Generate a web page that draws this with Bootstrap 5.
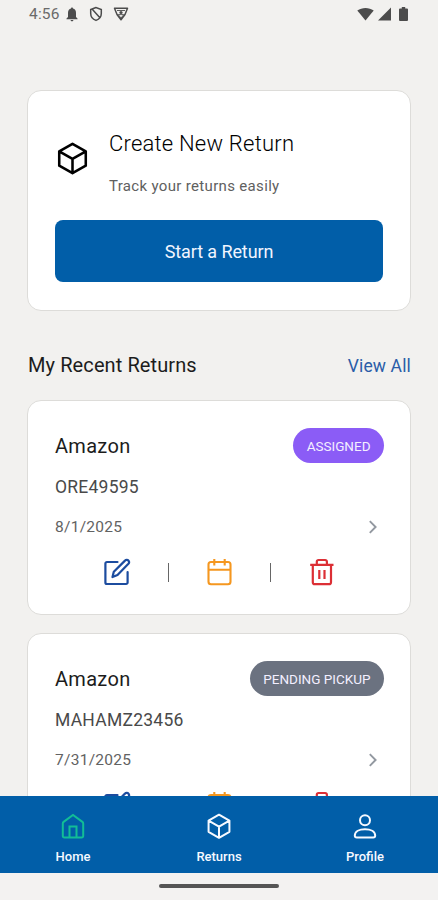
<!DOCTYPE html>
<html lang="en">
<head>
<meta charset="utf-8">
<meta name="viewport" content="width=device-width, initial-scale=1">
<title>Returns</title>
<link href="https://cdn.jsdelivr.net/npm/bootstrap@5.3.0/dist/css/bootstrap.min.css" rel="stylesheet">
<style>
body { font-family: Roboto, "Liberation Sans", sans-serif; background: #f2f1ef; color: #1c1c1c; }
svg { display: block; fill: none; stroke: currentColor; flex: none; }
.status-bar { height: 28px; padding: 0 30px 0 29px; color: #4c4c4c; }
.status-bar svg { fill: currentColor; stroke: none; }
.status-bar svg.line-icon { fill: none; stroke: currentColor; }
.clock { font-size: 15.5px; line-height: 28px; width: 36px; color: #6a6a6a; letter-spacing: .2px; }
.shield { margin-left: 10px; }
.content { padding: 62px 27px 0; min-height: 0; }
.panel { border: 1px solid #dddcd9; border-radius: 14px; background: #fff; padding: 27px; flex: none; }
.create { height: 221px; padding-top: 26px; }
.create-head { height: 103px; padding-top: 12px; gap: 19px; }
.cube-lg { margin-top: 12px; }
.create-title { font-size: 22px; line-height: 30px; font-weight: 300; letter-spacing: .22px; color: #000; }
.create-sub { font-size: 15px; line-height: 20px; margin-top: 17px; color: #606060; letter-spacing: .33px; }
.btn-start { height: 62px; background: #015ea8; color: #f1f5ff; border-radius: 8px; font-size: 18px; line-height: 24px; border: 0; padding: 1px 0 0; letter-spacing: -.1px; }
.section-head { height: 89px; padding-top: 19px; }
.section-title { font-size: 20px; letter-spacing: .1px; padding-left: 1px; }
.view-all { font-size: 17.5px; color: #2a5da8; letter-spacing: .15px; padding-top: 2px; }
.return-card { height: 215px; margin-bottom: 18px; padding-right: 26px; }
.card-top { height: 35px; }
.store { font-size: 20px; letter-spacing: .3px; padding-top: 1px; }
.status-pill { height: 35px; line-height: 36px; padding: 0 13.500px; border-radius: 18px; font-size: 13.5px; color: #f3efff; }
.assigned { background: #8b5cf6; }
.pending { background: #6b7280; }
.order-no { font-size: 17.5px; line-height: 24px; margin-top: 12px; color: #494949; letter-spacing: .25px; }
.date-row { height: 24px; margin-top: 17px; padding-right: 5px; font-size: 15.5px; color: #626262; letter-spacing: .28px; }
.date-row svg { margin-bottom: 2px; }
.actions { height: 32px; margin-top: 16px; }
.actions > div { width: 51px; }
.actions svg { margin-right: 2px; }
.sep { width: 1px; height: 19px; background: #666; }
.edit { color: #1c4c9f; } .cal { color: #f5971f; } .trash { color: #dc2f35; } .chev { color: #9298a0; }
.tabs { height: 77px; background: #015ea8; color: #f6f9ff; font-size: 13px; }
.tab { padding-top: 15px; gap: 5px; line-height: 21px; }
.tab span { font-weight: 500; }
.tab-on svg { color: #12bd96; }
.gesture { height: 27px; background: #f3f2f1; padding-bottom: 1px; }
.gesture div { width: 120px; height: 4px; border-radius: 2px; background: #555; }
</style>
</head>
<body>
<svg class="d-none">
  <symbol id="cube" viewBox="0 0 24 24"><path d="M12 1.900 2.900 7.100v9.800l9.100 5.200 9.100-5.200V7.100zM2.900 7.100l9.100 5.200 9.100-5.200M12 12.300v9.800" stroke-width="1.750" stroke-linejoin="round"/></symbol>
  <symbol id="edit" viewBox="0 0 28 28"><path d="M14.500 4H3.900a1.500 1.500 0 0 0-1.500 1.500v19a1.500 1.500 0 0 0 1.500 1.500h19.200a1.500 1.500 0 0 0 1.500-1.500V14M9.500 19l1.300-5.200L22 2.600a2.200 2.200 0 0 1 3.500.1 2.400 2.400 0 0 1-.1 3.100L14.500 17z" stroke-width="2.200" stroke-linecap="round" stroke-linejoin="round"/></symbol>
  <symbol id="calendar" viewBox="0 0 28 28"><rect x="3.500" y="4" width="22" height="22.200" rx="2.500" stroke-width="2.100"/><path d="M3.500 11.700h22M9.300 1v6.500M19.700 1v6.500" stroke-width="2.100"/></symbol>
  <symbol id="trash" viewBox="0 0 28 28"><path d="M3.200 6.800h23.300M5.800 7v17.200a2 2 0 0 0 2 2H22a2 2 0 0 0 2-2V7M9.800 6V3.700A1.800 1.800 0 0 1 11.600 2h6.500a1.800 1.800 0 0 1 1.800 1.700V6M12.300 12v9M17.500 12v9" stroke-width="2.200"/></symbol>
  <symbol id="chevron" viewBox="0 0 12 16"><path d="m2.800 2.200 5.800 5.800-5.800 5.800" stroke-width="1.900"/></symbol>
</svg>
<div class="vh-100 d-flex flex-column overflow-hidden">
  <div class="status-bar d-flex align-items-center flex-shrink-0">
    <span class="clock">4:56</span>
    <svg width="14" height="16" viewBox="0 0 14 16"><path d="M7 1.500c.7 0 1 .5 1 1 2 .5 3 2 3 4.200V11l1.500 1.500v.7h-11v-.7L3 11V6.700c0-2.200 1-3.700 3-4.200 0-.5.300-1 1-1zM5.600 14h2.800c0 .8-.6 1.300-1.400 1.300S5.600 14.800 5.600 14z"/></svg>
    <svg class="line-icon shield" width="14" height="16" viewBox="0 0 14 16"><path d="M7 1.500 1.700 3.600v3.900c0 3.200 2.200 5.800 5.300 6.900 3.100-1.100 5.300-3.700 5.300-6.900V3.600zM3.300 3.200l7.600 8.600" stroke-width="1.500"/></svg>
    <svg class="line-icon shield" width="16" height="16" viewBox="0 0 16 16"><path d="M1.500 2.300h13L12 8.500l-4 5.300-4-5.300z" stroke-width="1.500" stroke-linejoin="round"/><path d="M4 4.500h8M5.200 8.600h5.600L8 12z" stroke-width=".9"/><circle cx="8" cy="6.500" r="1.600" fill="currentColor" stroke="none"/></svg>
    <svg class="ms-auto" width="17" height="14" viewBox="0 0 17 14"><path d="M.3 3.600C5 0 12 0 16.700 3.600L8.500 13.500z"/></svg>
    <svg class="ms-1" width="13" height="14" viewBox="0 0 13 14"><path d="M13 .5v13H0z"/></svg>
    <svg class="ms-2" width="9" height="14" viewBox="0 0 9 14"><path d="M2.800 0h3.400v1.500H8a1 1 0 0 1 1 1V13a1 1 0 0 1-1 1H1a1 1 0 0 1-1-1V2.500a1 1 0 0 1 1-1h1.800z"/></svg>
  </div>

  <main class="content flex-grow-1 d-flex flex-column overflow-hidden">
    <section class="panel create">
      <div class="create-head d-flex">
        <svg class="cube-lg text-black" width="35" height="35"><use href="#cube"/></svg>
        <div>
          <h1 class="create-title m-0">Create New Return</h1>
          <div class="create-sub">Track your returns easily</div>
        </div>
      </div>
      <button class="btn btn-start w-100">Start a Return</button>
    </section>

    <div class="section-head d-flex justify-content-between align-items-center flex-shrink-0">
      <span class="section-title">My Recent Returns</span>
      <a class="view-all text-decoration-none" href="#">View All</a>
    </div>

    <article class="panel return-card">
      <div class="card-top d-flex justify-content-between align-items-center"><span class="store">Amazon</span><span class="status-pill assigned">ASSIGNED</span></div>
      <div class="order-no">ORE49595</div>
      <div class="date-row d-flex justify-content-between align-items-center"><span>8/1/2025</span><svg class="chev" width="12" height="16"><use href="#chevron"/></svg></div>
      <div class="actions d-flex justify-content-center">
        <div class="d-flex align-items-center justify-content-center edit"><svg width="28" height="28"><use href="#edit"/></svg></div>
        <div class="d-flex align-items-center justify-content-center"><span class="sep"></span></div>
        <div class="d-flex align-items-center justify-content-center cal"><svg width="28" height="28"><use href="#calendar"/></svg></div>
        <div class="d-flex align-items-center justify-content-center"><span class="sep"></span></div>
        <div class="d-flex align-items-center justify-content-center trash"><svg width="28" height="28"><use href="#trash"/></svg></div>
      </div>
    </article>

    <article class="panel return-card">
      <div class="card-top d-flex justify-content-between align-items-center"><span class="store">Amazon</span><span class="status-pill pending">PENDING PICKUP</span></div>
      <div class="order-no">MAHAMZ23456</div>
      <div class="date-row d-flex justify-content-between align-items-center"><span>7/31/2025</span><svg class="chev" width="12" height="16"><use href="#chevron"/></svg></div>
      <div class="actions d-flex justify-content-center">
        <div class="d-flex align-items-center justify-content-center edit"><svg width="28" height="28"><use href="#edit"/></svg></div>
        <div class="d-flex align-items-center justify-content-center"><span class="sep"></span></div>
        <div class="d-flex align-items-center justify-content-center cal"><svg width="28" height="28"><use href="#calendar"/></svg></div>
        <div class="d-flex align-items-center justify-content-center"><span class="sep"></span></div>
        <div class="d-flex align-items-center justify-content-center trash"><svg width="28" height="28"><use href="#trash"/></svg></div>
      </div>
    </article>
  </main>

  <nav class="tabs d-flex flex-shrink-0">
    <div class="tab tab-on d-flex flex-column align-items-center flex-fill w-100">
      <svg width="30" height="30" viewBox="0 0 30 30"><path d="M4.800 12.500V25a1.500 1.500 0 0 0 1.500 1.500h17.400a1.500 1.500 0 0 0 1.500-1.500V12.500a2 2 0 0 0-.8-1.600L15 4l-9.400 6.900a2 2 0 0 0-.8 1.600zM11.500 26V15.500h7V26" stroke-width="2"/></svg>
      <span>Home</span>
    </div>
    <div class="tab d-flex flex-column align-items-center flex-fill w-100">
      <svg width="30" height="30" viewBox="0 0 30 30"><use href="#cube" width="27.500" height="27.500" x="1.250" y="1.500"/></svg>
      <span>Returns</span>
    </div>
    <div class="tab d-flex flex-column align-items-center flex-fill w-100">
      <svg width="30" height="30" viewBox="0 0 30 30"><circle cx="15" cy="9.300" r="5" stroke-width="2"/><path d="M4.800 24.500c0-4.200 4.600-6.300 10.200-6.300s10.200 2.100 10.200 6.300c0 1.300-.7 2-2 2H6.800c-1.300 0-2-.7-2-2z" stroke-width="2"/></svg>
      <span>Profile</span>
    </div>
  </nav>
  <div class="gesture d-flex align-items-center justify-content-center flex-shrink-0"><div></div></div>
</div>
<script src="https://cdn.jsdelivr.net/npm/bootstrap@5.3.0/dist/js/bootstrap.bundle.min.js"></script>
</body>
</html>
